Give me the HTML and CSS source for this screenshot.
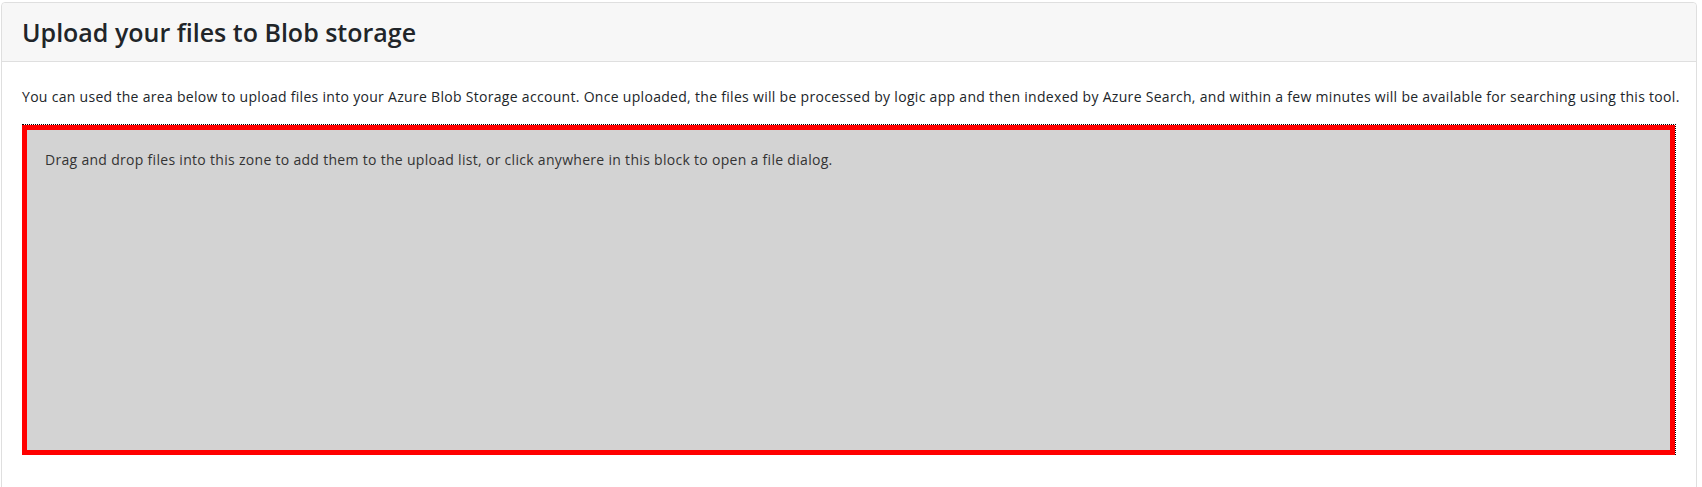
FILE: index.html
```html
<!DOCTYPE html>
<html lang="en">
<head>
<meta charset="utf-8">
<title>Upload your files to Blob storage</title>
<link rel="stylesheet" href="styles.css">
</head>
<body>
<div class="page">
  <div class="card">
    <div class="card-header">
      <h3 class="card-title">Upload your files to Blob storage</h3>
    </div>
    <div class="card-body">
      <p class="intro">You can used the area below to upload files into your Azure Blob Storage account. Once uploaded, the files will be processed by logic app and then indexed by Azure Search, and within a few minutes will be available for searching using this tool.</p>
      <div class="dropzone-focus">
        <div class="dropzone">
          <div class="dz-message">Drag and drop files into this zone to add them to the upload list, or click anywhere in this block to open a file dialog.</div>
        </div>
      </div>
    </div>
  </div>
</div>
</body>
</html>
```
FILE: styles.css
```css
html, body {
  margin: 0;
  padding: 0;
  background: #fff;
}
body {
  font-family: "Open Sans", "Noto Sans", sans-serif;
  color: #212529;
  overflow: hidden;
}
.page {
  height: 100vh;
  box-sizing: border-box;
  overflow: hidden;
  padding: 2px 5px 0 1px;
}
.card {
  border: 1px solid #dfdfdf;
  border-radius: 4px;
  min-height: 600px;
  background: #fff;
}
.card-header {
  background: #f7f7f7;
  border-bottom: 1px solid #dfdfdf;
  padding: 12px 20px 12px;
  border-radius: 4px 4px 0 0;
}
.card-title {
  margin: 0;
  font-size: 25px;
  font-weight: 600;
  line-height: 34px;
  color: #212529;
}
.card-body {
  padding: 25px 20px 20px;
}
.intro {
  margin: 0 0 17px;
  font-size: 14px;
  letter-spacing: 0.3px;
  line-height: 20px;
  white-space: nowrap;
}
.dropzone-focus {
  border-top: 1px dotted #000;
  border-right: 1px dotted #000;
}
.dropzone {
  background: #d3d3d3;
  border: 5px solid #ff0000;
  height: 280px;
  padding: 20px 18px 20px;
}
.dz-message {
  font-size: 14px;
  letter-spacing: 0.3px;
  line-height: 20px;
  color: #333;
}
```
